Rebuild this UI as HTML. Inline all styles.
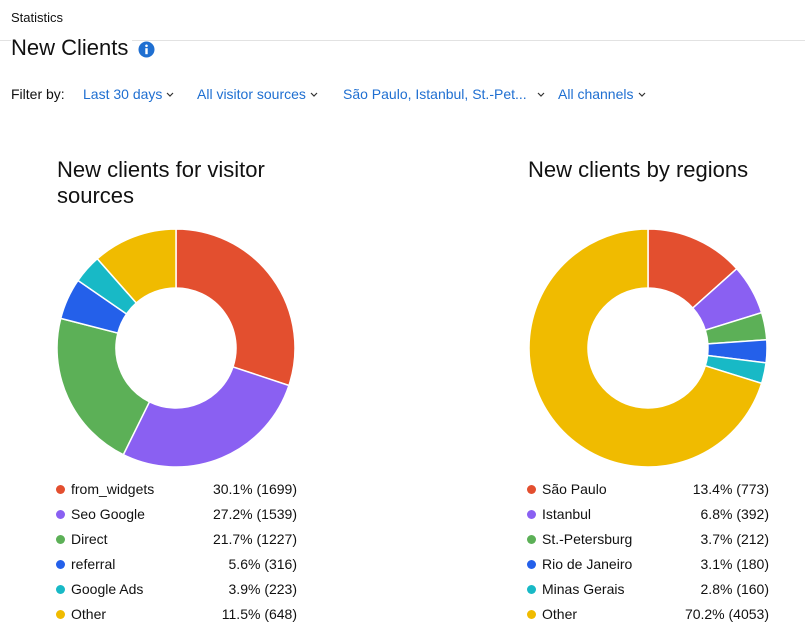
<!DOCTYPE html>
<html><head><meta charset="utf-8"><style>
*{margin:0;padding:0;box-sizing:border-box}
body{width:805px;height:640px;background:#fff;font-family:"Liberation Sans",sans-serif;color:#111;position:relative;overflow:hidden}
.a{position:absolute;white-space:nowrap}
.hr{position:absolute;left:0;top:40px;width:805px;height:1px;background:#e2e2e2}
.f{color:#1f6fd1;font-size:14px;top:86px}
.f svg{margin-left:4px;vertical-align:2px}
.t{font-size:22px;line-height:26px}
.row{position:absolute;height:20px;font-size:14px;line-height:20px}
.dot{position:absolute;left:0;top:6px;width:9px;height:9px;border-radius:50%}
.lab{position:absolute;left:15px}
.val{position:absolute;right:0}
</style></head><body>
<div class="hr"></div>
<div class="a" style="left:11px;top:10px;font-size:13px">Statistics</div>
<div class="a" style="left:11px;top:35px;font-size:22px;background:#fff;padding-right:4px">New Clients</div>
<svg class="a" style="left:138px;top:41px" width="17" height="17" viewBox="0 0 17 17"><circle cx="8.5" cy="8.5" r="8" fill="#1f6fd1"/><circle cx="8.5" cy="4.8" r="1.3" fill="#fff"/><rect x="7.3" y="7.2" width="2.4" height="6" fill="#fff"/></svg>
<div class="a" style="left:11px;top:86px;font-size:14px">Filter by:</div>
<div class="a f" style="left:83px">Last 30 days<svg width="8" height="5" viewBox="0 0 8 5"><path d="M1 1l3 3 3-3" fill="none" stroke="#333" stroke-width="1.2"/></svg></div>
<div class="a f" style="left:197px">All visitor sources<svg width="8" height="5" viewBox="0 0 8 5"><path d="M1 1l3 3 3-3" fill="none" stroke="#333" stroke-width="1.2"/></svg></div>
<div class="a f" style="left:343px">São Paulo, Istanbul, St.-Pet...<svg width="8" height="5" viewBox="0 0 8 5" style="margin-left:10px"><path d="M1 1l3 3 3-3" fill="none" stroke="#333" stroke-width="1.2"/></svg></div>
<div class="a f" style="left:558px">All channels<svg width="8" height="5" viewBox="0 0 8 5"><path d="M1 1l3 3 3-3" fill="none" stroke="#333" stroke-width="1.2"/></svg></div>
<div class="a t" style="left:57px;top:157px">New clients for visitor<br>sources</div>
<div class="a t" style="left:528px;top:157px">New clients by regions</div>
<svg class="a" style="left:0;top:0" width="805" height="640" id="s"></svg>
<div id="L"></div>
<script>
var C=["#e34f2f","#8a60f2","#5cb057","#2460ea","#18b9c6","#f0bb00"];
function donut(cx,cy,vals){var R=119,r=60,a=-Math.PI/2,h="";
for(var i=0;i<vals.length;i++){var b=a+vals[i]/100*2*Math.PI,l=(b-a)>Math.PI?1:0;
var p=function(rr,t){return (cx+rr*Math.cos(t)).toFixed(2)+" "+(cy+rr*Math.sin(t)).toFixed(2)};
h+='<path d="M'+p(R,a)+' A'+R+' '+R+' 0 '+l+' 1 '+p(R,b)+' L'+p(r,b)+' A'+r+' '+r+' 0 '+l+' 0 '+p(r,a)+' Z" fill="'+C[i]+'" stroke="#fff" stroke-width="1.5"/>';a=b;}
return h;}
document.getElementById("s").innerHTML=donut(176,348,[30.1,27.2,21.7,5.6,3.9,11.5])+donut(648,348,[13.4,6.8,3.7,3.1,2.8,70.2]);
function leg(x,w,rows){var h="";rows.forEach(function(r,i){h+='<div class="row" style="left:'+x+'px;width:'+w+'px;top:'+(479+i*25)+'px"><span class="dot" style="background:'+C[i]+'"></span><span class="lab">'+r[0]+'</span><span class="val">'+r[1]+'</span></div>'});return h;}
document.getElementById("L").innerHTML=leg(56,241,[["from_widgets","30.1% (1699)"],["Seo Google","27.2% (1539)"],["Direct","21.7% (1227)"],["referral","5.6% (316)"],["Google Ads","3.9% (223)"],["Other","11.5% (648)"]])+leg(527,242,[["São Paulo","13.4% (773)"],["Istanbul","6.8% (392)"],["St.-Petersburg","3.7% (212)"],["Rio de Janeiro","3.1% (180)"],["Minas Gerais","2.8% (160)"],["Other","70.2% (4053)"]]);
</script>
</body></html>
